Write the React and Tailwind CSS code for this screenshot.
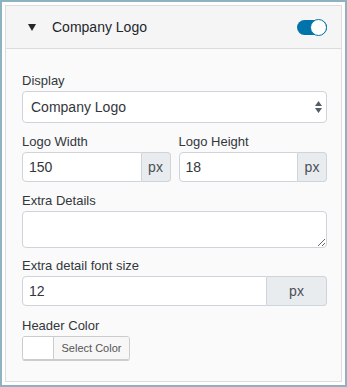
const font = { fontFamily: '"Liberation Sans", Arial, sans-serif' };

const Field = ({ label, children, className = "" }) => (
  <div className={`min-w-0 ${className}`}>
    <label className="mb-px block text-[13px] leading-[18px] text-[#32373c]">{label}</label>
    {children}
  </div>
);

const PxInput = ({ value, addonWidth = "w-[29px]" }) => (
  <div className="flex h-[30px]">
    <input
      size={1}
      defaultValue={value}
      className="w-0 min-w-0 flex-1 rounded-l-[4px] border border-[#ced4da] bg-white px-[6px] text-[14px] text-[#32373c] outline-none"
    />
    <span
      className={`flex ${addonWidth} shrink-0 items-center justify-center rounded-r-[4px] border border-l-0 border-[#ced4da] bg-[#e9ecef] text-[14px] text-[#495057]`}
    >
      px
    </span>
  </div>
);

const App = () => {
  return (
    <div className="h-[387px] w-[347px] border-2 border-[#8fb2c3] bg-white p-[3px]" style={font}>
      <div className="flex h-full flex-col border border-[#dcdcdc]">
        <div className="flex h-[43px] shrink-0 items-center border-b border-[#dcdcdc] bg-[#f5f5f5] pr-[14px]">
          <svg className="ml-[22px]" width="8" height="7" viewBox="0 0 8 7">
            <path d="M0 0h8L4 7z" fill="#23282d" />
          </svg>
          <span className="ml-[16px] flex-1 text-[14px] font-medium text-[#23282d]">Company Logo</span>
          <div className="relative h-[15px] w-[30px] rounded-full bg-[#0073aa]">
            <div className="absolute right-0 top-[-1px] h-[17px] w-[17px] rounded-full border border-[#0073aa] bg-white" />
          </div>
        </div>
        <div className="flex-1 bg-[#fafafa] pl-[16px] pr-[14px] pt-[23px]">
          <Field label="Display">
            <div className="relative">
              <select className="h-[32px] w-full appearance-none rounded-[4px] border border-[#ced4da] bg-white px-[8px] text-[14px] text-[#32373c] outline-none">
                <option>Company Logo</option>
              </select>
              <svg className="pointer-events-none absolute right-[5px] top-[10px]" width="7" height="12" viewBox="0 0 7 12">
                <path d="M3.5 0L7 5H0z M0 7h7l-3.5 5z" fill="#555d66" />
              </svg>
            </div>
          </Field>
          <div className="mt-[10px] flex gap-[8px]">
            <Field label="Logo Width" className="flex-1">
              <PxInput value="150" />
            </Field>
            <Field label="Logo Height" className="flex-1">
              <PxInput value="18" />
            </Field>
          </div>
          <Field label="Extra Details" className="mt-[10px]">
            <textarea className="block h-[37px] w-full rounded-[4px] border border-[#ced4da] bg-white outline-none" />
          </Field>
          <Field label="Extra detail font size" className="mt-[9px]">
            <PxInput value="12" addonWidth="w-[60px]" />
          </Field>
          <Field label="Header Color" className="mt-[11px]">
            <button className="flex h-[24px] w-[108px] overflow-hidden rounded-[3px] border border-[#cccccc] shadow-[0_1px_0_#cccccc]">
              <span className="h-full w-[30px] bg-white" />
              <span className="flex h-full flex-1 items-center justify-center border-l border-[#cccccc] bg-[#f7f7f7] text-[11px] text-[#555555]">
                Select Color
              </span>
            </button>
          </Field>
        </div>
      </div>
    </div>
  );
};

export default App;
